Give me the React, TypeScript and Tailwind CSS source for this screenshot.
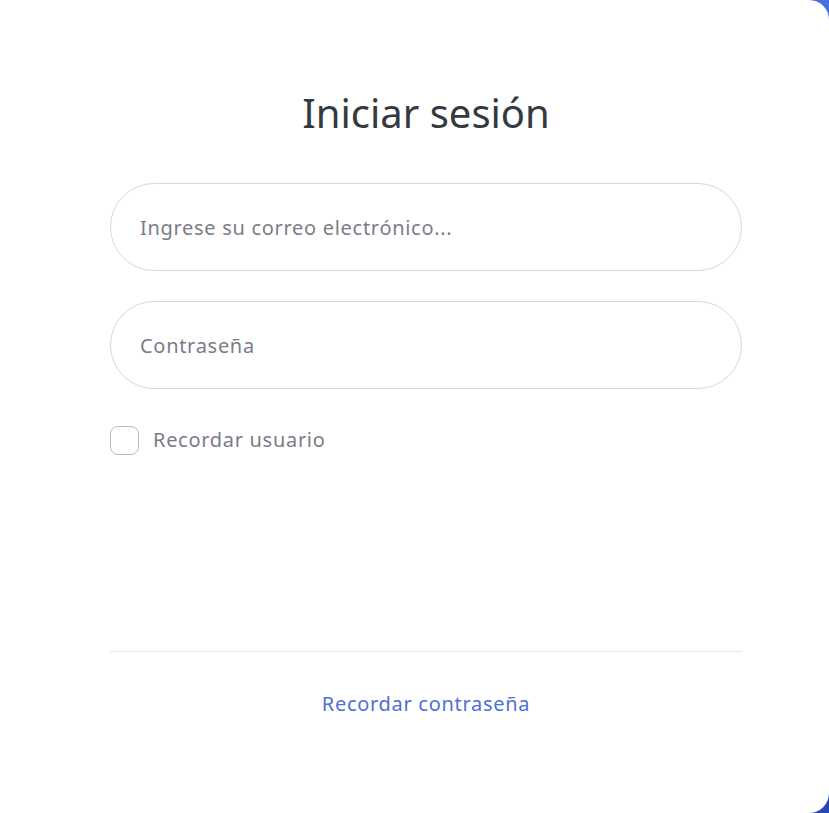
export default function App() {
  return (
    <div className="min-h-screen w-full bg-gradient-to-b from-[#4a6fe0] to-[#2a45b0]">
      <div
        className="flex min-h-[813px] w-full flex-col rounded-r-[20px] bg-white pt-[86px] pr-[87px] pb-[94px] pl-[110px]"
        style={{ fontFamily: '"Noto Sans", "Open Sans", sans-serif' }}
      >
        <h1 className="text-center text-[40px] leading-[54px] font-normal text-[#343a40]">
          Iniciar sesión
        </h1>

        <form className="mt-[43px] flex flex-col gap-[30px]">
          <input
            type="email"
            placeholder="Ingrese su correo electrónico..."
            className="h-[88px] w-full rounded-full border border-[#d6d8df] px-[29px] text-[20px] tracking-[0.7px] text-[#343a40] outline-none placeholder:text-[#7b7c87]"
          />
          <input
            type="password"
            placeholder="Contraseña"
            className="h-[88px] w-full rounded-full border border-[#d6d8df] px-[29px] text-[20px] tracking-[0.7px] text-[#343a40] outline-none placeholder:text-[#7b7c87]"
          />
        </form>

        <label className="mt-[36px] flex items-center gap-[14px]">
          <span className="h-[29px] w-[29px] rounded-[8px] border border-[#b9bcc6] bg-white" />
          <span className="text-[20px] tracking-[0.7px] text-[#7b7c87]">Recordar usuario</span>
        </label>

        <div className="mt-auto border-t border-[#e3e6f0] pt-[37px] text-center">
          <a href="#" className="text-[20px] tracking-[0.7px] text-[#4e6fd6]">
            Recordar contraseña
          </a>
        </div>
      </div>
    </div>
  );
}
